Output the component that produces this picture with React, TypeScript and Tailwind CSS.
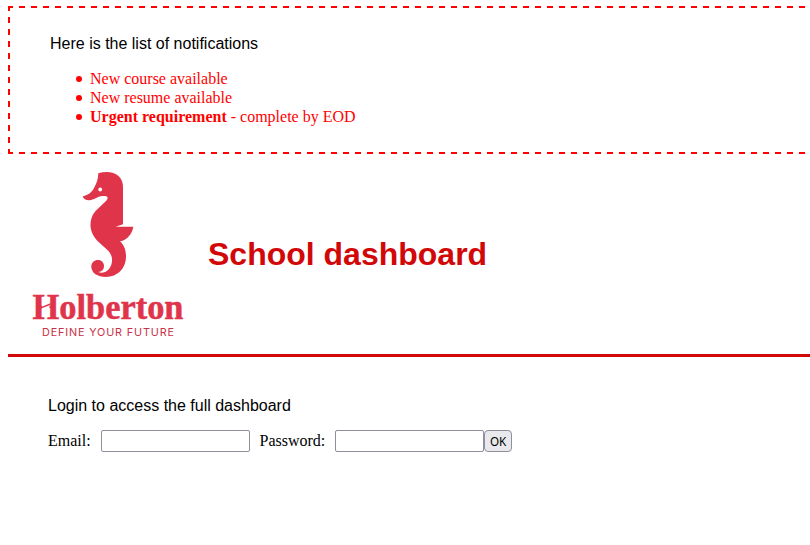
import React from "react";

function Seahorse() {
  return (
    <svg className="block h-[190px] w-[200px]" viewBox="8 159 200 190" role="img" aria-label="Holberton">
      <g fill="#e0344b">
        <path d="M98.3 173.2C106 170.800 114 171.700 118.500 176C121.500 179 123 182.500 123 187V224.300C120.500 225.300 118 226 115.600 226.700H133.300C132.300 233.500 127.500 240 120 241.300C124.500 245.500 126 250.500 126 256.500C126 268.500 117.500 276.900 106 276.900C97.500 276.900 91.300 273 91.300 266.500C91.300 262.500 94.500 260 98 260C101.700 260 104 262.700 104 266C104 269.500 101.500 271.800 98.300 272C101 273.300 105.500 272.800 108.500 269.500C113 264.500 113.500 256.500 108.500 251L97.500 241C88.500 232 88.500 219 95.500 211L105.500 201.500C109.500 197.500 107.500 195.700 102.500 196.100C97 196.500 94 200.500 89 200.300C85.500 200.200 83.500 198.500 82.700 196.400C88.500 195.200 92 191.800 94 188C96.600 183 98.300 179 98.300 173.200Z" />
        <circle cx="100.200" cy="189.500" r="1.900" fill="#fff" />
        <text x="32.500" y="318.800" fontFamily="'Liberation Serif', serif" fontWeight="700" fontSize="35.500" textLength="151" lengthAdjust="spacingAndGlyphs" stroke="#e0344b" strokeWidth=".5">Holberton</text>
        <path fill="#fff" d="M42 302H49.500V312H42Z" />
        <path fill="none" stroke="#e0344b" strokeWidth="1.400" d="M41 307.800L50.500 304" />
        <text x="42" y="335.500" fontFamily="Inter, sans-serif" fontSize="10.800" textLength="132" fill="#c83246">DEFINE YOUR FUTURE</text>
      </g>
    </svg>
  );
}

export default function App() {
  return (
    <div className="h-[545px] w-full overflow-hidden bg-white pl-2 pt-1.5 font-['Liberation_Serif',serif] text-base text-black">
      <section className="h-[148px] bg-[repeating-linear-gradient(90deg,red_0_5px,transparent_5px_11px,red_11px_12px),repeating-linear-gradient(90deg,red_0_5px,transparent_5px_11px,red_11px_12px),repeating-linear-gradient(180deg,red_0_5px,transparent_5px_11px,red_11px_12px)] bg-[length:100%_2px,100%_2px,2px_100%] bg-[position:0_0,0_100%,0_0] bg-no-repeat pl-[42px] pt-[29px]">
        <p className="font-['Liberation_Sans',sans-serif] leading-[18px]">Here is the list of notifications</p>
        <ul className="mt-4 list-none leading-[19px] text-[#ff0000]">
          {["New course available", "New resume available"].map((item) => (
            <li key={item} className="flex items-center">
              <span className="ml-[26px] mr-2 h-1.5 w-1.5 rounded-full bg-[#ff0000]" />
              {item}
            </li>
          ))}
          <li className="flex items-center">
            <span className="ml-[26px] mr-2 h-1.5 w-1.5 rounded-full bg-[#ff0000]" />
            <span><b>Urgent requirement</b> - complete by EOD</span>
          </li>
        </ul>
      </section>
      <header className="flex h-[203px] items-center border-b-[3px] border-[#d20708]">
        <Seahorse />
        <h1 className="font-['Liberation_Sans',sans-serif] text-[32px] font-bold leading-9 text-[#d20708]">School dashboard</h1>
      </header>
      <main className="pl-10 pt-10">
        <p className="font-['Liberation_Sans',sans-serif] leading-[18px]">Login to access the full dashboard</p>
        <form className="mt-[15px] flex h-[22px] items-center">
          <label htmlFor="email" className="w-[53px]">Email:</label>
          <input id="email" className="h-[22px] w-[149px] rounded-[2px] border border-[#8f8f9d] bg-white px-1" />
          <label htmlFor="password" className="ml-[9.5px] w-[75.5px]">Password:</label>
          <input id="password" type="password" className="h-[22px] w-[149px] rounded-[2px] border border-[#8f8f9d] bg-white px-1" />
          <button type="button" className="h-[22px] w-7 rounded border border-[#8f8f9d] bg-[#e9e9ed] font-['Noto_Sans',sans-serif] text-[13px] leading-5"><span className="inline-block origin-center scale-x-90">OK</span></button>
        </form>
      </main>
    </div>
  );
}
